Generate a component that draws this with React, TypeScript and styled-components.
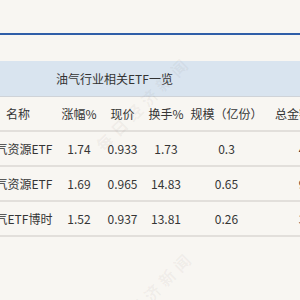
import React from "react";
import styled, { createGlobalStyle } from "styled-components";

const GlobalStyle = createGlobalStyle`
  html, body {
    margin: 0;
    padding: 0;
    background: #f8f6f2;
  }
  body {
    font-family: "Noto Sans CJK SC", "Noto Sans", sans-serif;
    color: #333333;
    overflow: hidden;
  }
`;

interface Column {
  key: keyof EtfRow;
  label: string;
  width: number;
}

interface EtfRow {
  name: string;
  change: string;
  price: string;
  turnover: string;
  scale: string;
  amount: string;
}

const COLUMNS: Column[] = [
  { key: "name", label: "名称", width: 76 },
  { key: "change", label: "涨幅%", width: 46 },
  { key: "price", label: "现价", width: 41 },
  { key: "turnover", label: "换手%", width: 46 },
  { key: "scale", label: "规模（亿份）", width: 75 },
  { key: "amount", label: "总金额（万元）", width: 106 },
];

const ROWS: EtfRow[] = [
  { name: "油气资源ETF", change: "1.74", price: "0.933", turnover: "1.73", scale: "0.3", amount: "438.26" },
  { name: "油气资源ETF", change: "1.69", price: "0.965", turnover: "14.83", scale: "0.65", amount: "936.04" },
  { name: "油气ETF博时", change: "1.52", price: "0.937", turnover: "13.81", scale: "0.26", amount: "353.15" },
];

const App: React.FC = () => {
  return (
    <Page>
      <GlobalStyle />
      <TopRule />
      <TitleBand>
        <Title>油气行业相关ETF一览</Title>
      </TitleBand>
      <Table>
        <Row>
          {COLUMNS.map(col => (
            <Cell key={col.key} $width={col.width}>
              {col.label}
            </Cell>
          ))}
        </Row>
        {ROWS.map((row, i) => (
          <Row key={i}>
            {COLUMNS.map(col => (
              <Cell key={col.key} $width={col.width}>
                {row[col.key]}
              </Cell>
            ))}
          </Row>
        ))}
      </Table>
      <Watermark $x={143} $y={103}>每日经济新闻</Watermark>
      <Watermark $x={146} $y={298}>每日经济新闻</Watermark>
    </Page>
  );
};

export default App;

const Page = styled.div`
  position: relative;
  width: 300px;
  height: 300px;
  overflow: hidden;
  padding-top: 33px;
  box-sizing: border-box;
`;

const TopRule = styled.div`
  height: 2px;
  background: #2f5ea8;
  margin-bottom: 26px;
`;

const TitleBand = styled.div`
  height: 35px;
  display: flex;
  align-items: center;
  padding-left: 56px;
  background: #d9e4ef;
  border-bottom: 1px solid #cfd3d8;
`;

const Title = styled.span`
  font-size: 12px;
  color: #333333;
  white-space: nowrap;
`;

const Table = styled.div`
  margin-left: -20px;
  display: flex;
  flex-direction: column;
`;

const Row = styled.div`
  display: flex;
  height: 33px;
  align-items: center;
  border-bottom: 2px solid #e2dfdb;
`;

const Cell = styled.div<{ $width: number }>`
  flex: 0 0 ${({ $width }) => $width}px;
  display: flex;
  justify-content: center;
  white-space: nowrap;
  font-size: 12px;
  color: #353535;
`;

const Watermark = styled.div<{ $x: number; $y: number }>`
  position: absolute;
  left: ${({ $x }) => $x}px;
  top: ${({ $y }) => $y}px;
  transform: translate(-50%, -50%) rotate(-45deg);
  font-size: 16px;
  font-weight: 700;
  letter-spacing: 5px;
  color: rgba(120, 110, 100, 0.07);
  white-space: nowrap;
  pointer-events: none;
`;
